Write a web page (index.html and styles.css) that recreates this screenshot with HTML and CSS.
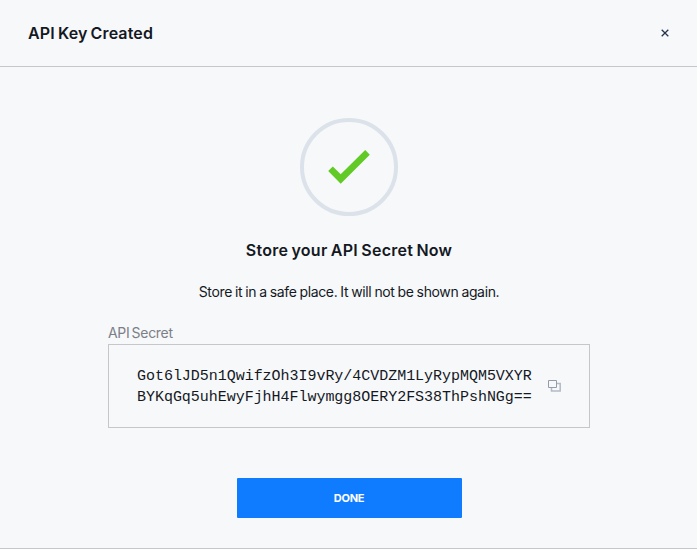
FILE: index.html
```html
<!DOCTYPE html>
<html lang="en">
<head>
  <meta charset="UTF-8">
  <meta name="viewport" content="width=device-width, initial-scale=1.0">
  <title>API Key Created</title>
  <link rel="stylesheet" href="styles.css">
</head>
<body>
  <div class="modal">
    <!-- Header -->
    <div class="modal-header">
      <h1 class="modal-title">API Key Created</h1>
      <button class="close-btn" aria-label="Close">
        <svg viewBox="0 0 8 8">
          <path d="M0.7 0.7L7.3 7.3M7.3 0.7L0.7 7.3" />
        </svg>
      </button>
    </div>

    <!-- Content -->
    <div class="modal-body">
      <div class="success-icon">
        <svg viewBox="0 0 42 34">
          <path d="M0.2 21L4.8 16.4L12.7 24.2L37.2 0.1L41.8 4.7L12.7 33.8Z" />
        </svg>
      </div>
      <h2 class="subtitle">Store your API Secret Now</h2>
      <p class="description">Store it in a safe place. It will not be shown again.</p>

      <div class="secret">
        <div class="secret-label">API Secret</div>
        <div class="secret-box">
          <code class="secret-value">Got6lJD5n1QwifzOh3I9vRy/4CVDZM1LyRypMQM5VXYR<br>BYKqGq5uhEwyFjhH4Flwymgg8OERY2FS38ThPshNGg==</code>
          <button class="copy-btn" aria-label="Copy">
            <svg viewBox="0 0 13 12">
              <path class="copy-back" d="M9 3.5H12.2V11H3.5V8" />
              <path class="copy-front" d="M0.5 0.5H8.5V7.5H0.5Z" />
            </svg>
          </button>
        </div>
      </div>

      <button class="done-btn">DONE</button>
    </div>
  </div>
</body>
</html>
```

FILE: styles.css
```css
* {
  box-sizing: border-box;
}

body {
  margin: 0;
  font-family: Inter, "Liberation Sans", sans-serif;
  background-color: #f7f8fa;
  color: #14181f;
}

button {
  padding: 0;
  border: none;
  background: none;
  cursor: pointer;
}

.modal {
  height: 549px;
  border-bottom: 1px solid #c5c7cb;
}

/* Header */
.modal-header {
  display: flex;
  align-items: center;
  justify-content: space-between;
  height: 67px;
  padding: 0 28px;
  border-bottom: 1px solid #c5c7cb;
}

.modal-title {
  margin: 0;
  font-size: 16px;
  font-weight: 600;
  line-height: 24px;
  letter-spacing: 0.12px;
  word-spacing: -1px;
}

.close-btn {
  display: flex;
}

.close-btn svg {
  width: 8px;
  height: 8px;
  fill: none;
  stroke: #26334d;
  stroke-width: 1.3;
}

/* Content */
.modal-body {
  display: flex;
  flex-direction: column;
  align-items: center;
  padding: 51px 0 0 1px;
}

.success-icon {
  display: flex;
  align-items: center;
  justify-content: center;
  width: 98px;
  height: 98px;
  border: 4px solid #dbe2ea;
  border-radius: 50%;
}

.success-icon svg {
  width: 42px;
  height: 34px;
  fill: #61ca26;
}

.subtitle {
  margin: 22px 0 0;
  font-size: 16px;
  font-weight: 600;
  line-height: 24px;
  letter-spacing: 0.26px;
  word-spacing: -1px;
}

.description {
  margin: 20px 0 0;
  font-size: 14px;
  line-height: 20px;
  letter-spacing: -0.35px;
  word-spacing: -0.6px;
}

/* API secret */
.secret {
  width: 482px;
  margin-top: 21px;
}

.secret-label {
  height: 21px;
  font-size: 14px;
  line-height: 20px;
  letter-spacing: -0.3px;
  word-spacing: -1.5px;
  color: #7c7f88;
}

.secret-box {
  display: flex;
  align-items: center;
  height: 84px;
  padding-left: 28px;
  border: 1px solid #c5c7cb;
}

.secret-value {
  padding-top: 2px;
  font-family: "Liberation Mono", monospace;
  font-size: 15px;
  line-height: 21px;
  letter-spacing: -0.03px;
}

.copy-btn {
  display: flex;
  margin-left: 16px;
}

.copy-btn svg {
  width: 13px;
  height: 12px;
  fill: none;
}

.copy-front {
  stroke: #949ca9;
}

.copy-back {
  stroke: #b4bac3;
  stroke-width: 1.5;
}

.done-btn {
  width: 225px;
  height: 40px;
  margin-top: 50px;
  border-radius: 1px;
  background-color: #0f7cff;
  color: #fff;
  font-family: Inter, "Liberation Sans", sans-serif;
  font-size: 11px;
  font-weight: 700;
  letter-spacing: -0.3px;
}
```
